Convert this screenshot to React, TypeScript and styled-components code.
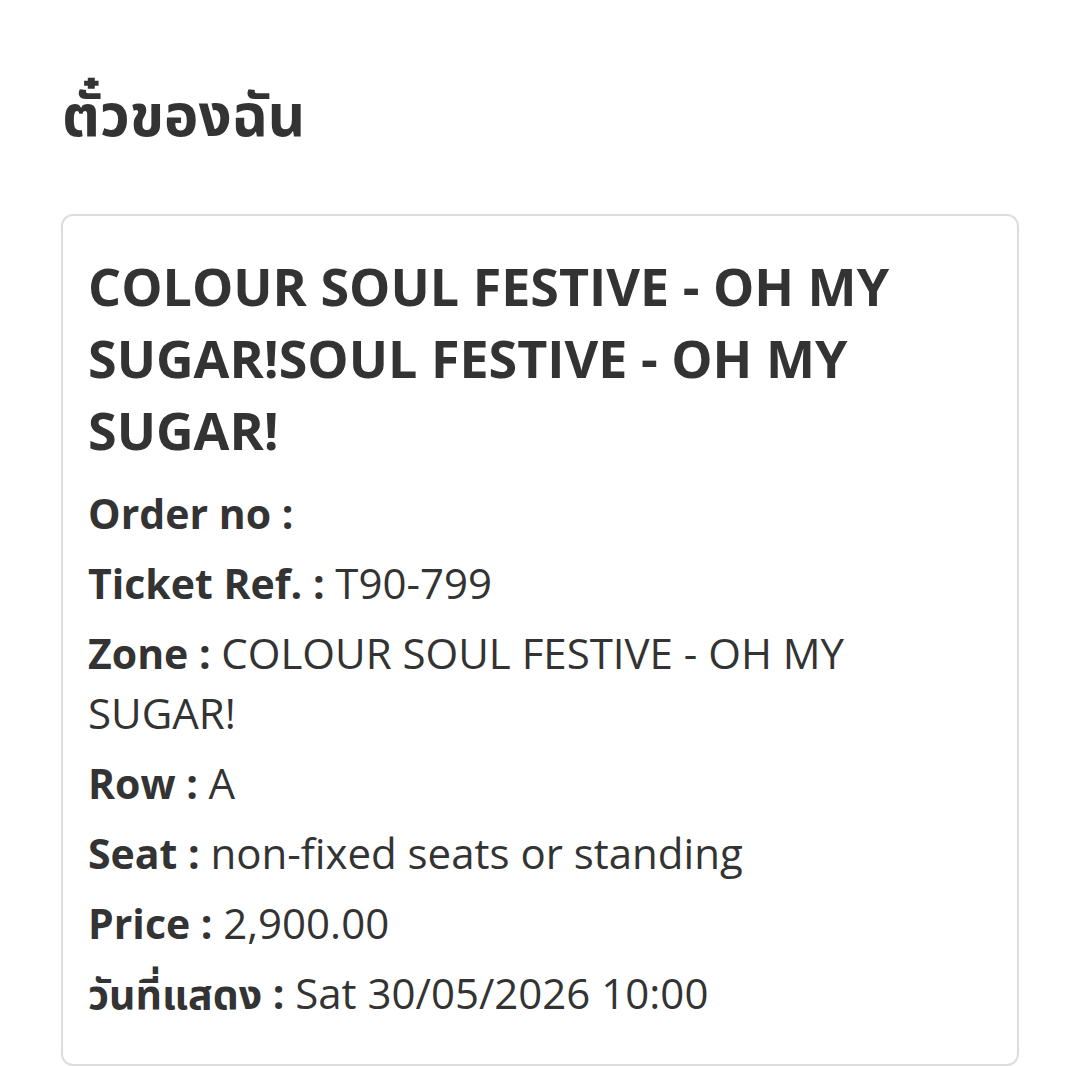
import React from "react";
import styled, { createGlobalStyle } from "styled-components";

const GlobalStyle = createGlobalStyle`
  html, body {
    margin: 0;
    padding: 0;
    background: #ffffff;
  }
  body {
    font-family: "Open Sans", "Noto Sans", "Noto Sans Thai", sans-serif;
    color: #333333;
  }
`;

const Page = styled.main`
  padding: 70px 61px 0 61px;
`;

const Heading = styled.h1`
  margin: 0 0 57px 0;
  font-size: 58px;
  line-height: 87px;
  font-weight: 700;
  color: #333333;
  padding-left: 1px;
`;

const Card = styled.section`
  border: 2px solid #dddddd;
  border-radius: 12px;
  padding: 34px 25px 36px 25px;
`;

const EventTitle = styled.h2`
  margin: 0 0 12px 0;
  font-size: 52px;
  line-height: 72px;
  font-weight: 700;
  color: #333333;
`;

const DetailList = styled.div`
  display: flex;
  flex-direction: column;
`;

const DetailRow = styled.p`
  margin: 0;
  padding: 5px 0;
  font-size: 42px;
  line-height: 60px;
  font-weight: 400;
  color: #333333;
`;

const Label = styled.span`
  font-size: 41px;
  font-weight: 700;
`;

const details: { label: string; value: string }[] = [
  { label: "Order no", value: "" },
  { label: "Ticket Ref.", value: "T90-799" },
  { label: "Zone", value: "COLOUR SOUL FESTIVE - OH MY SUGAR!" },
  { label: "Row", value: "A" },
  { label: "Seat", value: "non-fixed seats or standing" },
  { label: "Price", value: "2,900.00" },
  { label: "วันที่แสดง", value: "Sat 30/05/2026 10:00" },
];

export default function App() {
  return (
    <>
      <GlobalStyle />
      <Page>
        <Heading>ตั๋วของฉัน</Heading>
        <Card>
          <EventTitle>
            COLOUR SOUL FESTIVE - OH MY SUGAR!SOUL FESTIVE - OH MY SUGAR!
          </EventTitle>
          <DetailList>
            {details.map((d) => (
              <DetailRow key={d.label}>
                <Label>{d.label} : </Label>
                {d.value}
              </DetailRow>
            ))}
          </DetailList>
        </Card>
      </Page>
    </>
  );
}
